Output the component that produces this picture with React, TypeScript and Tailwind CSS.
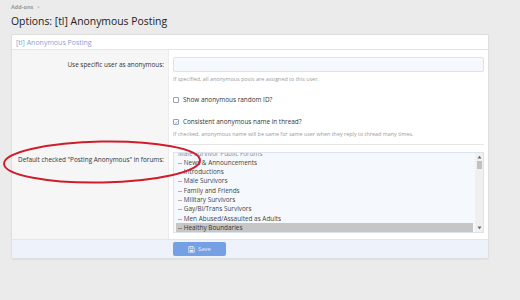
import React from "react";

const items = [
  "Male Survivor Public Forums",
  "-- News & Announcements",
  "-- Introductions",
  "-- Male Survivors",
  "-- Family and Friends",
  "-- Military Survivors",
  "-- Gay/Bi/Trans Survivors",
  "-- Men Abused/Assaulted as Adults",
  "-- Healthy Boundaries",
];

export default function App() {
  return (
    <div
      className="relative w-[520px] h-[300px] overflow-hidden bg-[#ebebeb] text-[#333]"
      style={{ fontFamily: '"Open Sans", "Noto Sans", Arial, sans-serif' }}
    >
      <div className="px-[11px] pt-[4px]">
        <div className="h-[9px] text-[5.5px] leading-[7px] font-bold text-[#9a9a9a]">
          Add-ons <span className="font-normal ml-[2px]">&gt;</span>
        </div>
        <div className="h-[21px] text-[10.4px] leading-[16px] text-[#222]">
          Options: [tl] Anonymous Posting
        </div>
        <div className="w-[478px] bg-white border border-[#dedede] rounded-[2px] shadow-[0_1px_1px_rgba(0,0,0,0.04)]">
          <div className="h-[15px] border-b border-[#e6e6e6] px-[4px] text-[7px] leading-[15px] text-[#8a9fd3]">
            [tl] Anonymous Posting
          </div>
          <div className="flex">
            <div className="w-[157px] shrink-0 bg-[#f6f6f6] border-r border-[#ececec] flex flex-col text-[6.4px] text-right pr-[4px]">
              <div className="h-[29px] leading-[29px]">Use specific user as anonymous:</div>
              <div className="h-[71px]"></div>
              <div className="leading-[9px] pt-[5px]">Default checked "Posting Anonymous" in forums:</div>
            </div>
            <div className="flex-1 px-[4px] pt-[7px] pb-[6px]">
              <div className="h-[15px] border border-[#dbe3ee] bg-[#f5f9fd] rounded-[2px]"></div>
              <div className="h-[15px] text-[5.4px] leading-[15px] text-[#9a9a9a] whitespace-nowrap">
                If specified, all anonymous posts are assigned to this user.
              </div>
              <div className="h-[8px]"></div>
              <div className="flex items-center gap-[4px] h-[10px] text-[6.4px] leading-[10px]">
                <span className="w-[6px] h-[6px] border border-[#8fa0bc] bg-white rounded-[1px]"></span>
                <span>Show anonymous random ID?</span>
              </div>
              <div className="h-[12px]"></div>
              <div className="flex items-center gap-[4px] h-[10px] text-[6.4px] leading-[10px]">
                <span className="w-[6px] h-[6px] border border-[#8fa0bc] bg-white rounded-[1px] flex items-center justify-center">
                  <svg width="5" height="5" viewBox="0 0 10 10">
                    <path d="M2 5.2 L4.2 7.4 L8.2 2.6" fill="none" stroke="#6f86b8" strokeWidth="1.6" />
                  </svg>
                </span>
                <span>Consistent anonymous name in thread?</span>
              </div>
              <div className="h-[14px] text-[5.4px] leading-[14px] text-[#9a9a9a] whitespace-nowrap">
                If checked, anonymous name will be same for same user when they reply to thread many times.
              </div>
              <div className="h-[4px] border-b border-[#e6e6e6]"></div>
              <div className="h-[7px]"></div>
              <div className="h-[81px] border border-[#dbe3ee] bg-[#f5f9fd] flex overflow-hidden">
                <div className="flex-1 overflow-hidden pl-[2px] pr-[2px]">
                  <div className="-mt-[4.5px]">
                    {items.map((t, i) => (
                      <div
                        key={t}
                        className={
                          "h-[9.3px] leading-[9.3px] text-[6.4px] pl-[2px] whitespace-nowrap " +
                          (i === 8 ? "bg-[#c6c6c6] text-[#333]" : i === 0 ? "text-[#888]" : "text-[#444]")
                        }
                      >
                        {t}
                      </div>
                    ))}
                  </div>
                </div>
                <div className="w-[8px] bg-[#f0f0f0] flex flex-col items-center">
                  <div className="h-[8px] flex items-center justify-center">
                    <svg width="5" height="4" viewBox="0 0 5 4">
                      <path d="M0.5 3.5 L2.5 0.8 L4.5 3.5 Z" fill="#666" />
                    </svg>
                  </div>
                  <div className="w-[5px] h-[8px] bg-[#c1c1c1]"></div>
                  <div className="flex-1"></div>
                  <div className="h-[8px] flex items-center justify-center">
                    <svg width="5" height="4" viewBox="0 0 5 4">
                      <path d="M0.5 0.5 L2.5 3.2 L4.5 0.5 Z" fill="#666" />
                    </svg>
                  </div>
                </div>
              </div>
            </div>
          </div>
          <div className="h-[19px] bg-[#eef3fb] border-t border-[#e1e6ee] flex items-center pl-[161px]">
            <div className="w-[53px] h-[14px] bg-[#76a0e4] rounded-[2px] flex items-center justify-center gap-[3px] text-[6px] text-[#e8f0fc]">
              <svg width="7" height="7" viewBox="0 0 10 10">
                <path d="M1 1 H7.5 L9 2.5 V9 H1 Z" fill="none" stroke="#e8f0fc" strokeWidth="1" />
                <rect x="3" y="1" width="4" height="3" fill="none" stroke="#e8f0fc" strokeWidth="0.8" />
                <rect x="2.6" y="5.6" width="4.8" height="2.6" fill="#e8f0fc" />
              </svg>
              <span>Save</span>
            </div>
          </div>
        </div>
      </div>
      <svg className="absolute left-0 top-0 pointer-events-none" width="520" height="300" viewBox="0 0 520 300">
        <ellipse
          cx="102"
          cy="162"
          rx="98"
          ry="20.5"
          transform="rotate(-1 102 162)"
          fill="none"
          stroke="#cf1d2b"
          strokeWidth="2"
        />
      </svg>
    </div>
  );
}
